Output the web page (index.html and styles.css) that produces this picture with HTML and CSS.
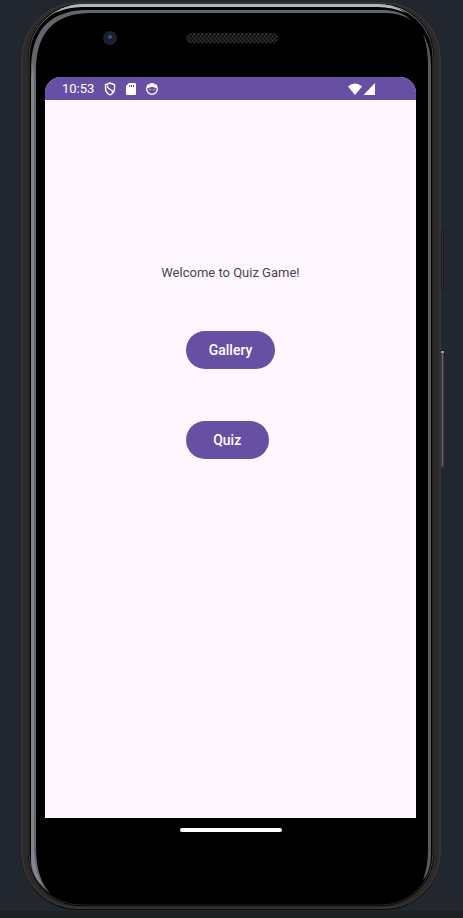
FILE: index.html
```html
<!DOCTYPE html>
<html lang="en">
<head>
<meta charset="utf-8">
<meta name="viewport" content="width=device-width, initial-scale=1">
<title>Quiz Game</title>
<link rel="stylesheet" href="styles.css">
</head>
<body>
<div class="device">
  <svg class="frame" viewBox="0 0 463 918" preserveAspectRatio="none" aria-hidden="true">
    <defs>
      <linearGradient id="rim" x1="0" y1="0" x2="0" y2="1">
        <stop offset="0" stop-color="#b4b9bd"/>
        <stop offset=".01" stop-color="#85888c"/>
        <stop offset=".04" stop-color="#48484a"/>
        <stop offset=".94" stop-color="#48484a"/>
        <stop offset="1" stop-color="#222"/>
      </linearGradient>
      <pattern id="mesh" width="4" height="4" patternUnits="userSpaceOnUse">
        <rect width="4" height="4" fill="#1b1b1b"/>
        <rect width="1" height="1" fill="#3c3c3c"/>
        <rect x="2" y="2" width="1" height="1" fill="#3c3c3c"/>
        <rect x="2" width="1" height="1" fill="#080808"/>
        <rect y="2" width="1" height="1" fill="#080808"/>
      </pattern>
    </defs>
    <rect y="911" width="463" height="7" fill="#1d2124"/>
    <rect x="441" y="231" width="3" height="58" rx="1" fill="#1b1a1b"/>
    <rect x="442" y="232" width="1" height="56" fill="#353333"/>
    <rect x="441" y="351" width="3" height="117" rx="1" fill="#383737"/>
    <rect x="442" y="352" width="1" height="114" fill="#6b6967"/>
    <rect x="441" y="351" width="3" height="2" fill="#9a9894"/>
    <rect x="21" y="2" width="420" height="908" rx="57" fill="#0c0c0c"/>
    <rect x="22" y="3" width="418" height="905" rx="56" fill="#2a2a2a" stroke="#353332" stroke-width="2"/>
    <rect x="28" y="4" width="406" height="902" rx="53" fill="#000"/>
    <rect x="29" y="5" width="404" height="900" rx="52" fill="none" stroke="url(#rim)" stroke-width="1"/>
    <path d="M54 13Q68 4 82 4H378Q393 4 406 13Q392 7 378 7H82Q68 7 54 13Z" fill="#b0b5b8"/>
    <path d="M31 862V66Q33 11 86 10H386Q402 11 411 20Q400 13 386 13H88Q37 15 36 68V850Q37 880 50 893Q33 881 31 862Z" fill="#626569"/>
    <path d="M33 60L34 80V850Q35 873 43 886Q31 876 31 858V80Z" fill="#82868d"/>
    <path d="M423 34Q431 47 431 66V856Q430 873 423 880Q428 866 428 850V66Q428 47 423 34Z" fill="#5a595e"/>
    <circle cx="110" cy="38" r="7" fill="#202124"/>
    <circle cx="110" cy="38" r="4" fill="#14203f"/>
    <circle cx="110" cy="37" r="2" fill="#35508a"/>
    <rect x="186" y="33" width="92" height="10" rx="5" fill="url(#mesh)"/>
  </svg>

  <main class="screen">
    <header class="status">
      <time class="clock">10:53</time>
      <svg class="icon" viewBox="0 0 14 14" aria-hidden="true">
        <path d="M7 1L11.500 2.800V6.500Q11.500 10.500 7 13Q2.500 10.500 2.500 6.500V2.800ZM4.500 3.500V5.500L9.500 9V11" fill="none" stroke="#fff" stroke-width="1.400"/>
      </svg>
      <svg class="icon" viewBox="0 0 14 14" aria-hidden="true">
        <path d="M5 1H11Q12 1 12 2V12Q12 13 11 13H3Q2 13 2 12V4Z" fill="#fff"/>
        <path d="M5.500 3V5M7.500 3V5M9.500 3V5" stroke="#6750a4" stroke-width="1"/>
      </svg>
      <svg class="icon" viewBox="0 0 14 14" aria-hidden="true">
        <circle cx="7" cy="7" r="5.300" fill="none" stroke="#fff" stroke-width="1.300"/>
        <path d="M2 6Q1 2 5 2H9Q13 2 12 6L9 5.500L7 4.500L5 5.500Z" fill="#fff"/>
        <path d="M4.500 7.500H5.500M8.500 7.500H9.500" stroke="#fff"/>
        <path d="M4 2.500L5 3.500M9 3.500L10 2.500" stroke="#6750a4"/>
      </svg>
      <svg class="signal" viewBox="0 0 28 14" aria-hidden="true">
        <path d="M0 4.500Q7 -1.500 14 4.500L7 13Z" fill="#fff"/>
        <path d="M27 1V13H15.500Z" fill="#fff"/>
      </svg>
    </header>
    <section class="content">
      <p class="welcome">Welcome to Quiz Game!</p>
      <div class="actions">
        <button class="button" type="button">Gallery</button>
        <button class="button" type="button">Quiz</button>
      </div>
    </section>
  </main>
  <div class="home"></div>
</div>
</body>
</html>
```
FILE: styles.css
```css
* {
  box-sizing: border-box;
}

body {
  margin: 0;
  background: #22262f;
  font-family: Roboto, "Liberation Sans", sans-serif;
}

.device {
  position: relative;
  display: flex;
  flex-direction: column;
  min-height: 100vh;
  padding: 77px 47px 86px 45px;
}

.frame {
  position: absolute;
  inset: 0;
  width: 100%;
  height: 100%;
}

.screen {
  position: relative;
  display: flex;
  flex: 1;
  flex-direction: column;
  overflow: hidden;
  border-radius: 16px 16px 0 0;
  background: #fef7ff;
}

.status {
  display: flex;
  align-items: center;
  gap: 7px;
  padding: 0 40px 0 17px;
  background: #6750a4;
  color: #fff;
}

.clock {
  margin-right: 2px;
  font-size: 13px;
  line-height: 23px;
}

.icon {
  width: 14px;
  height: 14px;
}

.signal {
  width: 28px;
  height: 14px;
  margin-left: auto;
}

.content {
  display: flex;
  flex-direction: column;
  align-items: center;
  padding-top: 163px;
}

.welcome {
  margin: 0;
  color: #49454f;
  font-size: 13px;
  line-height: 20px;
}

.actions {
  display: flex;
  flex-direction: column;
  align-items: flex-start;
  gap: 52px;
  margin-top: 48px;
}

.button {
  min-width: 83px;
  padding: 0 23px;
  border: 0;
  border-radius: 19px;
  background: #6750a4;
  color: #fff;
  font: 500 14px/38px Roboto, "Liberation Sans", sans-serif;
}

.home {
  position: relative;
  align-self: center;
  width: 102px;
  height: 4px;
  margin-top: 10px;
  border-radius: 2px;
  background: #fff;
}
```
